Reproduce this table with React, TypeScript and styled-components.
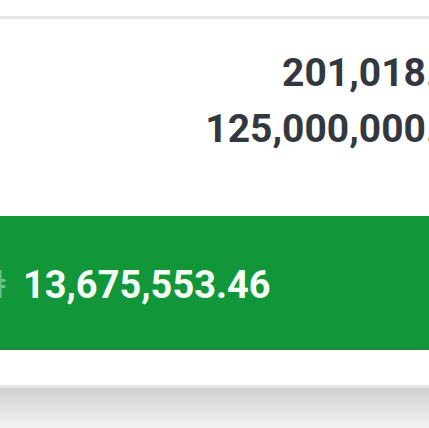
import React from "react";
import styled, { createGlobalStyle } from "styled-components";

const Global = createGlobalStyle`
  html, body { margin: 0; padding: 0; background: #ffffff; overflow: hidden; }
  body { width: 429px; height: 428px; font-family: Roboto, "Liberation Sans", sans-serif; }
`;

const Page = styled.div`
  width: 429px;
  height: 428px;
  display: flex;
  flex-direction: column;
  overflow: hidden;
  background: #ffffff;
`;

const TopStrip = styled.div`
  height: 16px;
  background: #ffffff;
  border-bottom: 3px solid #e8e8e8;
  flex: none;
`;

const Card = styled.div`
  flex: none;
  height: 366px;
  background: #ffffff;
  border-bottom: 3px solid #e6e6e6;
  display: flex;
  flex-direction: column;
`;

const Amounts = styled.div`
  height: 197px;
  flex: none;
  display: flex;
  flex-direction: column;
  align-items: flex-end;
  padding-top: 26px;
  box-sizing: border-box;
`;

const Amount = styled.div`
  font-size: 39px;
  font-weight: 700;
  color: #33383e;
  line-height: 56px;
  white-space: nowrap;
  margin-right: -53px;
`;

const Total = styled.div`
  height: 134px;
  flex: none;
  box-sizing: border-box;
  padding-top: 5px;
  background: #12963a;
  border-bottom: 2px solid #1d8a3c;
  display: flex;
  align-items: center;
  white-space: nowrap;
`;

const Currency = styled.span`
  font-size: 38px;
  font-weight: 700;
  color: rgba(255, 255, 255, 0.4);
  margin-left: -25px;
  margin-right: 17px;
`;

const TotalValue = styled.span`
  font-size: 38px;
  font-weight: 700;
  color: #f4fff6;
`;

const Shadow = styled.div`
  flex: 1;
  background: linear-gradient(#d0d0d0, #f4f4f4);
`;

export default function App() {
  return (
    <>
      <Global />
      <Page>
        <TopStrip />
        <Card>
          <Amounts>
            <Amount>201,018.00</Amount>
            <Amount>125,000,000.00</Amount>
          </Amounts>
          <Total>
            <Currency>₦</Currency>
            <TotalValue>13,675,553.46</TotalValue>
          </Total>
        </Card>
        <Shadow />
      </Page>
    </>
  );
}
